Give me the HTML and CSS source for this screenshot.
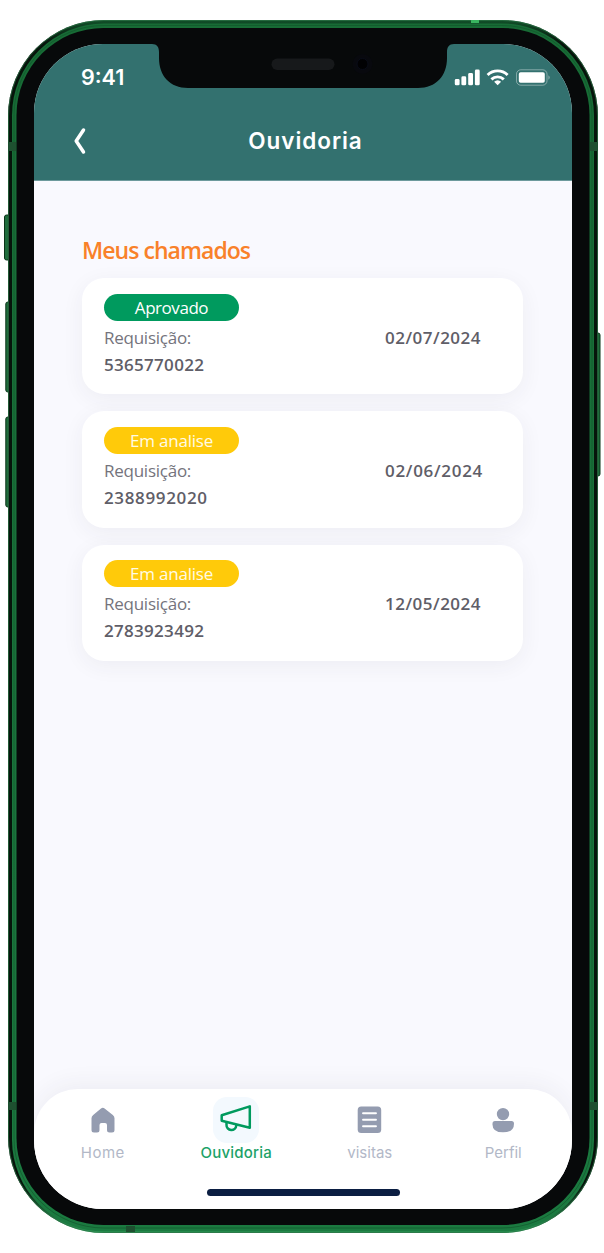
FILE: index.html
```
<!DOCTYPE html>
<html lang="pt-BR">
<head>
<meta charset="utf-8">
<meta name="viewport" content="width=device-width, initial-scale=1">
<title>Ouvidoria</title>
<link rel="stylesheet" href="styles.css">
</head>
<body>
<div class="phone">
  <svg class="hardware" viewBox="0 0 604 1253" aria-hidden="true">
    <defs>
      <linearGradient id="rim" x1="0" y1="0" x2="0" y2="1">
        <stop offset="0" stop-color="#176b35"/>
        <stop offset="1" stop-color="#1b7a40"/>
      </linearGradient>
      <linearGradient id="edge" x1="0" y1="0" x2="0" y2="1">
        <stop offset="0" stop-color="#12512a"/>
        <stop offset=".02" stop-color="#06140b"/>
        <stop offset=".96" stop-color="#06140b"/>
        <stop offset="1" stop-color="#2f9e5a"/>
      </linearGradient>
    </defs>
    <g fill="#1f6d3c" stroke="#0b3519" stroke-width="1">
      <rect x="4.500" y="215" width="6" height="45" rx="2"/>
      <rect x="5.800" y="302" width="5" height="90" rx="2"/>
      <rect x="5.800" y="417" width="5" height="90" rx="2"/>
      <rect x="595" y="333" width="5" height="143" rx="2"/>
    </g>
    <rect x="8" y="20" width="590" height="1213" rx="96" fill="url(#edge)"/>
    <rect x="8.500" y="20.500" width="589" height="1212" rx="95.500" fill="none" stroke="#2c7145" stroke-opacity=".75"/>
    <rect x="12" y="23.500" width="582" height="1208" rx="92" fill="url(#rim)"/>
    <rect x="14" y="25.500" width="578" height="1202.500" rx="90" fill="none" stroke="#10512a" stroke-opacity=".6"/>
    <rect x="16.500" y="28" width="573" height="1197" rx="87" fill="#07090a"/>
    <path fill="#1e5030" d="M8 142h8v9H8zM590 142h8v9h-8zM8 1102h8v8H8zM590 1102h8v8h-8zM126 1226h9v6h-9z"/>
    <path fill="#39b45f" d="M471 20h8v3h-8z"/>
  </svg>

  <div class="screen">
    <header class="top">
      <div class="status">
        <span class="clock">9:41</span>
        <svg class="signals" width="98" height="20" viewBox="453 67 98 20" aria-hidden="true">
          <g fill="#fff">
            <rect x="454.800" y="79" width="4.800" height="6.300" rx="1.400"/>
            <rect x="461.400" y="76.300" width="4.800" height="9" rx="1.400"/>
            <rect x="468.200" y="73" width="4.800" height="12.300" rx="1.400"/>
            <rect x="474.900" y="69.500" width="4.800" height="15.800" rx="1.400"/>
            <path d="M497.600 85.300l3.500-3.500a5.200 5.200 0 0 0-7 0z"/>
            <rect x="518.800" y="72.300" width="26" height="10.500" rx="1.800"/>
          </g>
          <g fill="none" stroke="#fff" stroke-width="2.900">
            <path d="M487.600 75a14.300 14.300 0 0 1 20 0"/>
            <path d="M491.400 79.400a9 9 0 0 1 12.400 0"/>
          </g>
          <rect x="516.500" y="69.800" width="30.500" height="15.400" rx="4.300" fill="none" stroke="#fff" stroke-opacity=".4"/>
          <path d="M548.500 75.200a3 3 0 0 1 0 4.600z" fill="#fff" fill-opacity=".5"/>
        </svg>
      </div>
      <div class="title-bar">
        <svg class="back" width="16" height="30" viewBox="0 0 16 30" aria-hidden="true"><path d="M11.500 4L4.200 15l7.300 11" fill="none" stroke="#fff" stroke-width="3.500" stroke-linecap="round" stroke-linejoin="round"/></svg>
        <h1>Ouvidoria</h1>
      </div>
    </header>

    <main class="content">
      <h2>Meus chamados</h2>
      <div class="cards">
        <article class="card">
          <span class="badge approved">Aprovado</span>
          <span class="label">Requisição:</span>
          <span class="number">5365770022</span>
          <time class="date">02/07/2024</time>
        </article>
        <article class="card">
          <span class="badge pending">Em analise</span>
          <span class="label">Requisição:</span>
          <span class="number wide">2388992020</span>
          <time class="date wide">02/06/2024</time>
        </article>
        <article class="card">
          <span class="badge pending">Em analise</span>
          <span class="label">Requisição:</span>
          <span class="number">2783923492</span>
          <time class="date">12/05/2024</time>
        </article>
      </div>
    </main>

    <nav class="tabs">
      <div class="tab">
        <span class="icon"><svg width="46" height="46" viewBox="0 0 46 46"><path fill="#949cb0" d="M21 11.500q1.800-1.300 3.600 0l8.200 6.500q1.700 1.300 1.700 3.300V33q0 2.500-2.500 2.500h-2.500q-2.500 0-2.500-2.500v-5q0-2-2-2h-3.500q-2 0-2 2v5q0 2.500-2.500 2.500h-3q-2.500 0-2.500-2.500V21.300q0-2 1.700-3.300z"/></svg></span>
        <span class="tab-name home">Home</span>
      </div>
      <div class="tab active">
        <span class="icon"><svg width="46" height="46" viewBox="0 0 46 46"><g fill="none" stroke="#009a5e" stroke-width="2.500" stroke-linejoin="round"><path d="M8.700 18.200L36.800 9.400v21.400L8.700 23.800z"/><path d="M13.500 25v2.800a4.900 4.900 0 0 0 9.800.6v-1"/></g></svg></span>
        <span class="tab-name">Ouvidoria</span>
      </div>
      <div class="tab">
        <span class="icon"><svg width="46" height="46" viewBox="0 0 46 46"><rect x="10.700" y="9.500" width="23.500" height="26.500" rx="3.500" fill="#949cb0"/><path d="M16 16.200h13M16 22.700h13M16 29.200h13" stroke="#fff" stroke-width="1.900" stroke-linecap="round"/></svg></span>
        <span class="tab-name">visitas</span>
      </div>
      <div class="tab">
        <span class="icon"><svg width="46" height="46" viewBox="0 0 46 46"><g fill="#949cb0"><circle cx="23" cy="17.100" r="6.200"/><path d="M15 24h16.500q2.500 0 2.500 2.700 0 8.600-11 8.600T12.500 26.700q0-2.700 2.500-2.700z"/></g></svg></span>
        <span class="tab-name">Perfil</span>
      </div>
      <span class="home-bar"></span>
    </nav>
  </div>

  <svg class="notch" width="302" height="44" viewBox="152 44 302 44" aria-hidden="true">
    <path fill="#07090a" d="M152 44C157 44 159 47 159 52V58C159 76 170 88 188 88H418C436 88 447 76 447 58V52C447 47 449 44 454 44Z"/>
    <rect x="271.500" y="58.500" width="63" height="11.500" rx="5.750" fill="#17191b"/>
    <circle cx="362.500" cy="64" r="10" fill="#08090e"/>
    <circle cx="362.500" cy="64" r="5.500" fill="#010103" stroke="#090c18"/>
  </svg>
</div>
</body>
</html>
```
FILE: styles.css
```
* { box-sizing: border-box; }

body {
  margin: 0;
  background: #fff;
  font-family: "Open Sans", "Noto Sans", sans-serif;
}

.phone {
  position: relative;
  width: 604px;
  height: 1253px;
  padding: 44px 32px 44px 34px;
}

.hardware {
  position: absolute;
  inset: 0;
  width: 604px;
  height: 1253px;
}

.notch {
  position: absolute;
  top: 44px;
  left: 152px;
}

.screen {
  position: relative;
  display: flex;
  flex-direction: column;
  height: 1165px;
  overflow: hidden;
  border-radius: 69px;
  background: #f9f9fe;
}

.top {
  height: 137px;
  padding-top: 17px;
  background: #33716f;
  border-bottom: 1px solid #6d9a9c;
  color: #fff;
}

.status {
  display: flex;
  justify-content: space-between;
  align-items: center;
  height: 32px;
  padding: 0 21px 0 47px;
}

.clock {
  font: 600 21.500px/32px Inter, sans-serif;
}

.title-bar {
  display: grid;
  grid-template-columns: 78px 1fr 74px;
  align-items: center;
  height: 96px;
}

.back {
  margin-left: 38px;
}

.title-bar h1 {
  margin: 0;
  font: 600 22.500px/32px Inter, sans-serif;
  letter-spacing: .950px;
  text-indent: 1px;
  text-align: center;
}

.content {
  flex: 1;
  padding: 52px 49px 0 48px;
}

.content h2 {
  margin: 0 0 11px;
  color: #f9812a;
  font-size: 23px;
  font-weight: 600;
  line-height: 34px;
  letter-spacing: -.950px;
  white-space: nowrap;
}

.cards {
  display: grid;
  gap: 17px;
}

.card {
  display: grid;
  grid-template-columns: 281px 1fr;
  grid-template-rows: 27px 27px 27px;
  row-gap: 0;
  height: 116.300px;
  padding: 15.500px 22px;
  border-radius: 22px;
  background: #fff;
  box-shadow: 0 5px 22px rgba(50, 50, 71, .06);
  color: #5f5e68;
  font-size: 17px;
  line-height: 27px;
  white-space: nowrap;
}

.badge {
  grid-column: 1 / -1;
  width: 135px;
  border-radius: 14px;
  color: #fff;
  line-height: 28px;
  text-align: center;
}

.approved {
  background: #009a5e;
  letter-spacing: -.450px;
}

.pending {
  background: #ffca0a;
  color: #fffbe5;
  letter-spacing: -.200px;
}

.label,
.number,
.date { padding-top: 3px; }

.label {
  grid-area: 2 / 1;
  color: #74737c;
  letter-spacing: -.250px;
}

.number {
  grid-area: 3 / 1;
  font-weight: 600;
  letter-spacing: .300px;
}

.date {
  grid-area: 2 / 2;
  font-weight: 600;
  letter-spacing: .500px;
}

.number.wide { letter-spacing: .650px; }
.date.wide { letter-spacing: .700px; }

.tabs {
  display: grid;
  grid-template-columns: repeat(4, 133.500px);
  grid-template-rows: 93px 1fr;
  justify-content: center;
  height: 120px;
  border-radius: 44px 44px 0 0;
  background: #fff;
  box-shadow: 0 -5px 24px rgba(50, 50, 71, .06);
}

.tab {
  display: flex;
  flex-direction: column;
  align-items: center;
  padding-top: 8px;
  color: #b2b8c7;
  font: 400 15px/20px Inter, sans-serif;
}

.icon {
  width: 46px;
  height: 46px;
  border-radius: 14px;
}

.icon svg { display: block; }

.home { letter-spacing: .500px; }

.active {
  color: #1da268;
  font-weight: 500;
  letter-spacing: .200px;
}

.active .icon { background: #f3f9fe; }

.home-bar {
  grid-column: 1 / -1;
  justify-self: center;
  width: 193px;
  height: 7px;
  margin-top: 7px;
  border-radius: 4px;
  background: #0b1e42;
}
```
